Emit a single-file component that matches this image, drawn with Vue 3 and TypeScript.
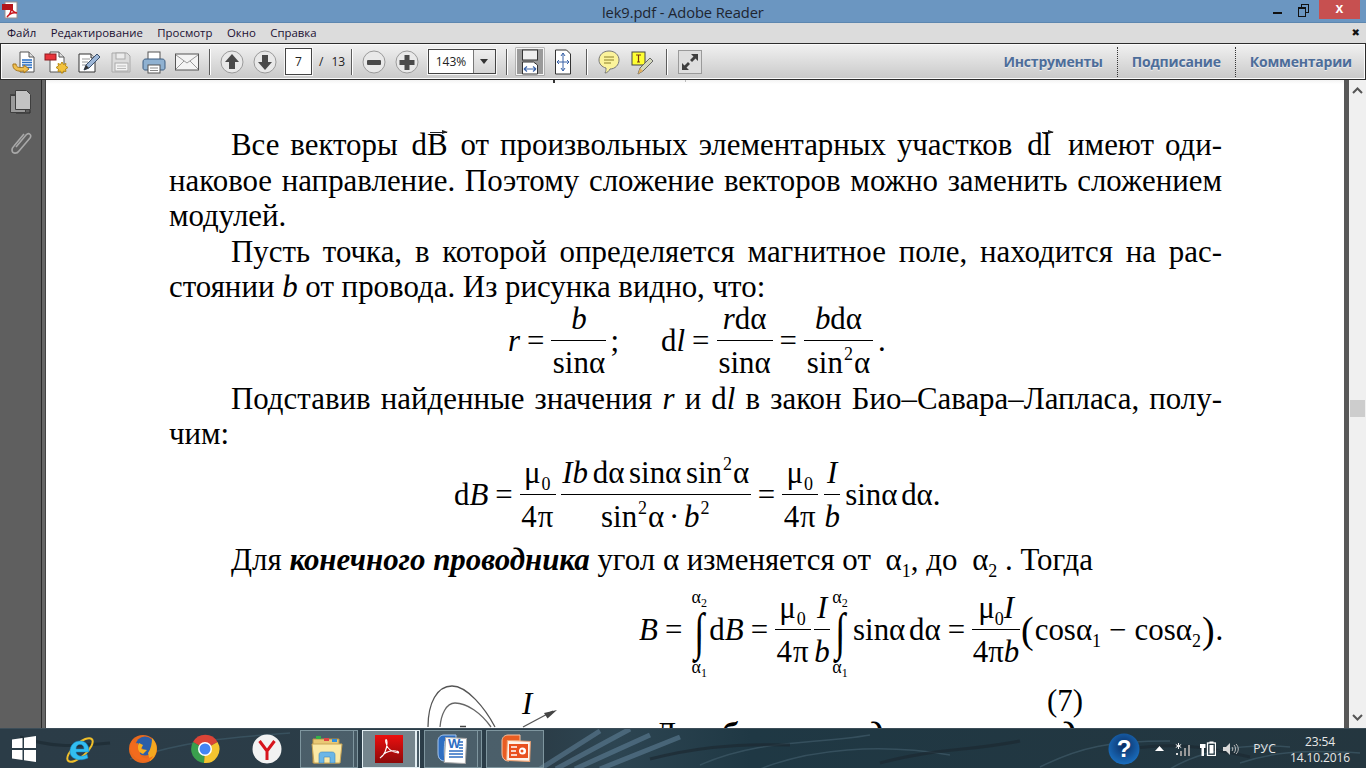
<script setup lang="ts">
const menus: string[] = ['Файл', 'Редактирование', 'Просмотр', 'Окно', 'Справка']
const panels: string[] = ['Инструменты', 'Подписание', 'Комментарии']
</script>

<template>
  <div class="screen">
    <header class="titlebar">
      <svg class="app-icon" width="18" height="18" viewBox="0 0 18 18">
        <rect x="4" y="1" width="12" height="16" fill="#fff" stroke="#9a8f8f" />
        <rect x="1" y="3" width="11" height="6" fill="#b3161b" />
        <path d="M6 16c3-2 5-7 4-11 0 4 2 6 6 7-4-1-7 0-10 4z" fill="none" stroke="#c8141b" stroke-width="1.4" />
      </svg>
      <span class="title">lek9.pdf - Adobe Reader</span>
      <div class="winbtns">
        <svg width="10" height="4" viewBox="0 0 10 4" class="wmin"><rect y="1" width="9" height="2" fill="#111" /></svg>
        <svg width="12" height="14" viewBox="0 0 12 14" class="wmax">
          <rect x="3.5" y="0.5" width="7" height="8" fill="none" stroke="#111" />
          <rect x="0.5" y="3.5" width="7" height="9" fill="#6b96c1" stroke="#111" />
          <rect x="0" y="3" width="8" height="2" fill="#111" />
        </svg>
        <div class="wclose">x</div>
      </div>
    </header>

    <nav class="menubar">
      <span v-for="m in menus" :key="m" class="menu">{{ m }}</span>
      <span class="menu-x">✖</span>
    </nav>

    <div class="toolbar">
      <!-- open -->
      <svg class="ic" width="24" height="24" viewBox="0 0 24 24">
        <path d="M9 2h9l5 5v15H9z" fill="#fff" stroke="#555" />
        <path d="M18 2v5h5" fill="#ddd" stroke="#555" />
        <path d="M11 10h10M11 12.500h10M11 15h10M11 17.500h10" stroke="#2a6fc4" stroke-width="1.300" />
        <path d="M2 14c-1 6 5 8 11 7v2l5-4-5-4v2c-4 1-8 1-8-3z" fill="#f0c050" stroke="#a8761a" />
      </svg>
      <!-- create -->
      <svg class="ic" width="24" height="24" viewBox="0 0 24 24">
        <path d="M6 2h9l5 5v15H6z" fill="#fff" stroke="#555" />
        <path d="M15 2v5h5" fill="#ddd" stroke="#555" />
        <rect x="1" y="4" width="11" height="6" fill="#e8333a" stroke="#8d1b1f" />
        <path d="M18 12l1.500 2.500 2.500-1-.5 2.500 2.500 1.500-2.500 1.500.5 2.500-2.500-.5-1.500 2.500-1.500-2.500-2.500.5.5-2.500-2.500-1.500 2.500-1.500-.5-2.500 2.500 1z" fill="#f3c23c" stroke="#b88a16" />
      </svg>
      <!-- edit -->
      <svg class="ic" width="24" height="24" viewBox="0 0 24 24">
        <path d="M2 4h12l4 4v14H2z" fill="#fff" stroke="#333" />
        <path d="M14 4v4h4" fill="#ddd" stroke="#333" />
        <path d="M5 9h8M5 12h6M5 15h4" stroke="#999" />
        <path d="M7 20l2-5L20 4l3 3L12 18z" fill="#9db7d8" stroke="#3b4f6b" />
        <path d="M7 20l2-5 3 3z" fill="#333" />
      </svg>
      <!-- save -->
      <svg class="ic save" width="22" height="24" viewBox="0 0 22 24">
        <path d="M2 3h15l3 3v16H2z" fill="#dcdcdc" stroke="#aaa" />
        <rect x="6" y="3" width="9" height="6" fill="#ececec" stroke="#aaa" />
        <rect x="5" y="13" width="13" height="8" fill="#f3f3f3" stroke="#aaa" />
        <path d="M7 16h9M7 18.500h9" stroke="#bbb" />
      </svg>
      <!-- print -->
      <svg class="ic" width="24" height="24" viewBox="0 0 24 24">
        <rect x="6" y="2" width="12" height="9" fill="#fff" stroke="#555" />
        <path d="M1 12c0-2 1-3 3-3h16c2 0 3 1 3 3v6c0 1-1 2-2 2H3c-1 0-2-1-2-2z" fill="#8fb1d1" stroke="#3c5d80" />
        <rect x="6" y="15" width="12" height="8" fill="#fff" stroke="#555" />
        <path d="M8 18h8M8 20.500h8" stroke="#888" />
      </svg>
      <!-- mail -->
      <svg class="ic mail" width="24" height="18" viewBox="0 0 24 18">
        <rect x="0.500" y="1" width="23" height="16" fill="#f4f4f4" stroke="#555" />
        <path d="M1 2l11 8 11-8M1 16l8-8M23 16l-8-8" fill="none" stroke="#999" />
      </svg>
      <i class="sep sep-a"></i>

      <svg class="ic" width="24" height="24" viewBox="0 0 24 24">
        <circle cx="12" cy="12" r="11" fill="#e9e9e9" stroke="#9a9a9a" />
        <path d="M12 4l7 8h-4v7H9v-7H5z" fill="#4a4a4a" />
      </svg>
      <svg class="ic" width="24" height="24" viewBox="0 0 24 24">
        <circle cx="12" cy="12" r="11" fill="#e9e9e9" stroke="#9a9a9a" />
        <path d="M12 20l7-8h-4V5H9v7H5z" fill="#4a4a4a" />
      </svg>
      <span class="pagebox">7</span>
      <span class="pagecount"><b>/</b><b>13</b></span>
      <i class="sep sep-b"></i>
      <svg class="ic" width="24" height="24" viewBox="0 0 24 24">
        <circle cx="12" cy="12" r="11" fill="#e9e9e9" stroke="#9a9a9a" />
        <rect x="5" y="10" width="14" height="5" rx="1" fill="#4a4a4a" />
      </svg>
      <svg class="ic" width="24" height="24" viewBox="0 0 24 24">
        <circle cx="12" cy="12" r="11" fill="#e9e9e9" stroke="#9a9a9a" />
        <path d="M9.500 5h5v5h5v5h-5v5h-5v-5h-5v-5h5z" fill="#4a4a4a" />
      </svg>
      <div class="zoombox">
        <span class="zoomval">143%</span>
        <span class="zoomarrow"></span>
      </div>
      <i class="sep sep-c"></i>
      <div class="fitw">
        <svg width="18" height="26" viewBox="0 0 18 26">
          <rect x="1.500" y="1" width="15" height="10" fill="#eee" stroke="#333" />
          <path d="M1.500 13h11l4 3v9h-15z" fill="#fff" stroke="#333" />
          <path d="M3 20h12M3 20l3-2.500M3 20l3 2.500M15 20l-3-2.500M15 20l-3 2.500" fill="none" stroke="#3a63a8" stroke-width="1.200" />
        </svg>
      </div>
      <svg class="ic fitp" width="18" height="26" viewBox="0 0 18 26">
        <path d="M1.500 1h11l4 4v20h-15z" fill="#fff" stroke="#333" />
        <path d="M9 4v18M9 4L7 7M9 4l2 3M9 22l-2-3M9 22l2-3M3 13h12M3 13l2-2M3 13l2 2M15 13l-2-2M15 13l-2 2" fill="none" stroke="#3a63a8" />
      </svg>
      <i class="sep sep-d"></i>
      <svg class="ic comment" width="22" height="26" viewBox="0 0 22 26">
        <path d="M11 2c6 0 10 4 10 9s-4 9-9 9c-1 2-3 4-5 4 1-2 1-3 1-5-4-1-7-4-7-8 0-5 4-9 10-9z" fill="#fbf39b" stroke="#777" />
        <path d="M6 8h10M6 11h10M6 14h7" stroke="#8a7f2a" />
      </svg>
      <svg class="ic" width="23" height="26" viewBox="0 0 23 26">
        <rect x="1" y="3" width="13" height="13" fill="#ffff33" stroke="#444" />
        <path d="M5 6h5M7.500 6v7M6 13h3" stroke="#7a3a10" stroke-width="1.200" />
        <path d="M7 25l2-6 10-10 3 3-10 10z" fill="#d4d8bc" stroke="#666" />
        <path d="M7 25l2-6 3 3z" fill="#e0b060" />
      </svg>
      <i class="sep sep-e"></i>
      <div class="expand">
        <svg width="18" height="18" viewBox="0 0 18 18">
          <path d="M10 1h7v7l-2.500-2.500-3.500 3.500-2-2 3.500-3.500zM8 17H1v-7l2.500 2.500L7 9l2 2-3.500 3.500z" fill="#3f3f3f" />
        </svg>
      </div>

      <div class="panels">
        <span v-for="p in panels" :key="p" class="panel">{{ p }}</span>
      </div>
    </div>

    <div class="main">
      <aside class="nav">
        <svg width="24" height="26" viewBox="0 0 24 26">
          <path d="M1 7h6v18h14v-3" fill="none" stroke="#2d2d2d" />
          <path d="M1.500 7.500h15v17h-15z" fill="#9a9a9a" stroke="#3e3e3e" />
          <path d="M6.500 2.500h11l4 4v15h-15z" fill="#c3c3c3" stroke="#3e3e3e" />
        </svg>
        <svg class="clip" width="22" height="26" viewBox="0 0 22 26">
          <path d="M6 17L16 5c3-3 6 0 4 3L9 21c-2 3-7 3-7-1 0-1 1-3 2-4L14 4" fill="none" stroke="#a8a8a8" stroke-width="1.600" />
        </svg>
      </aside>
      <div class="divider"></div>

      <article class="page">
        <i class="speck speck-a"></i>
        <i class="speck speck-b"></i>
        <div class="ln j ind">Все векторы <span class="gap-a">d<span class="vec">B</span></span> от произвольных элементарных участков <span class="gap-b">d<span class="vec vec-l">l</span></span> имеют оди-</div>
        <div class="ln j">наковое направление. Поэтому сложение векторов можно заменить сложением</div>
        <div class="ln">модулей.</div>
        <div class="ln j ind">Пусть точка, в которой определяется магнитное поле, находится на рас-</div>
        <div class="ln">стоянии <em>b</em> от провода. Из рисунка видно, что:</div>

        <div class="formula f1">
          <em>r</em><span class="eq">=</span>
          <span class="frac w55"><span class="num"><em>b</em></span><span class="den">sinα</span></span>
          <span class="semi">;</span>
          <span class="dl">d<em>l</em></span><span class="eq">=</span>
          <span class="frac w56"><span class="num"><em>r</em>dα</span><span class="den">sinα</span></span>
          <span class="eq">=</span>
          <span class="frac w69"><span class="num"><em>b</em>dα</span><span class="den">sin<sup>2</sup>α</span></span>
          <span class="dot">.</span>
        </div>

        <div class="ln j ind after-f1">Подставив найденные значения <em>r</em> и d<em>l</em> в закон Био–Савара–Лапласа, полу-</div>
        <div class="ln">чим:</div>

        <div class="formula f2">
          <span>d<em>B</em></span><span class="eq">=</span>
          <span class="frac w36"><span class="num">μ<sub>0</sub></span><span class="den">4π</span></span>
          <span class="frac w190"><span class="num tight"><em>Ib</em> dα sinα sin<sup>2</sup>α</span><span class="den tight">sin<sup>2</sup>α · <em>b</em><sup>2</sup></span></span>
          <span class="eq">=</span>
          <span class="frac w36"><span class="num">μ<sub>0</sub></span><span class="den">4π</span></span>
          <span class="frac w16"><span class="num"><em>I</em></span><span class="den"><em>b</em></span></span>
          <span class="tail">sinα dα.</span>
        </div>

        <div class="ln ind after-f2">Для <strong>конечного проводника</strong> угол α изменяется от <span class="gap-l">α<sub>1</sub></span>, до <span class="gap-l">α<sub>2</sub></span> . Тогда</div>

        <div class="formula f3">
          <em>B</em><span class="eq">=</span>
          <span class="int"><span class="lim">α<sub>2</sub></span><span class="sign">∫</span><span class="lim">α<sub>1</sub></span></span>
          <span class="tail0">d<em>B</em></span><span class="eq">=</span>
          <span class="frac w36"><span class="num">μ<sub>0</sub></span><span class="den">4π</span></span>
          <span class="frac w16 w16b"><span class="num"><em>I</em></span><span class="den"><em>b</em></span></span>
          <span class="int"><span class="lim">α<sub>2</sub></span><span class="sign">∫</span><span class="lim">α<sub>1</sub></span></span>
          <span class="tail0 tail1">sinα dα</span><span class="eq">=</span>
          <span class="frac w48"><span class="num">μ<sub>0</sub><em>I</em></span><span class="den">4π<em>b</em></span></span>
          <span class="paren">(</span><span>cosα<sub>1</sub></span><span class="minus">−</span><span>cosα<sub>2</sub></span><span class="paren">)</span><span>.</span>
        </div>

        <div class="figrow">
          <svg class="figure" width="140" height="44" viewBox="0 0 140 44">
            <path d="M1 44C1 20 10 3 25 3c15 0 33 22 43 41" fill="none" stroke="#555" stroke-width="1.300" />
            <path d="M13 44c1-12 6-24 15-24 12 0 26 10 36 24" fill="none" stroke="#666" stroke-width="1.300" />
            <path d="M33 43.500h6" stroke="#444" stroke-width="1.500" />
            <path d="M96 44l30-16" stroke="#555" stroke-width="1.300" />
            <path d="M130 27l-13 3 3.500 5.500z" fill="#444" />
            <text x="95" y="31" class="fig-i">I</text>
          </svg>
          <span class="eqno">(7)</span>
        </div>
        <div class="ln last">Для <strong class="last-b">бесконечно длинного проводника</strong></div>
      </article>

      <div class="strip"></div>
      <div class="scrollbar">
        <svg width="11" height="7" viewBox="0 0 11 7" class="arrow"><path d="M1 6l4.500-4.500L10 6" fill="none" stroke="#555" stroke-width="2" /></svg>
        <span class="thumb"></span>
        <svg width="11" height="7" viewBox="0 0 11 7" class="arrow"><path d="M1 1l4.500 4.500L10 1" fill="none" stroke="#555" stroke-width="2" /></svg>
      </div>
    </div>

    <footer class="taskbar">
      <svg class="grass" width="1366" height="40" viewBox="0 0 1366 40">
        <path d="M540 40L600 2M556 40L630 0M575 40L650 6M600 40L680 8" stroke="#6f93ad" stroke-width="5" opacity=".45" fill="none" />
        <path d="M700 36c60-26 110-20 170-30M760 40c50-20 120-26 190-14M1040 38c40-20 70-26 130-26M1170 40c30-18 70-26 120-22M1240 34c30-10 60-14 120-10M130 30c60-20 110-22 160-26" stroke="#3f5a68" stroke-width="1.500" opacity=".7" fill="none" />
        <path d="M650 30c40-10 80-16 140-14M880 34c50-14 90-12 140-22M1130 20c40-6 70-4 120 8M20 8c30 10 50 10 90 6" stroke="#1d2a32" stroke-width="3" opacity=".7" fill="none" />
      </svg>
      <svg class="win" width="24" height="28" viewBox="0 0 24 28">
        <path d="M0 4.500L10.500 3v10H0zM12 2.800L24 1v12H12zM0 15h10.500v10L0 23.500zM12 15h12v12l-12-1.800z" fill="#fff" />
      </svg>
      <div class="tb tb-ie">
        <svg width="30" height="32" viewBox="0 0 30 32">
          <ellipse cx="14" cy="17" rx="16" ry="6.500" transform="rotate(-42 14 17)" fill="none" stroke="#f0bf2a" stroke-width="2" />
          <path d="M4 19c0-7 4-11 10-11s9 4 9 11H10c.5 4 6 6 11 2l1 4c-8 4-18 1-18-6zm6-3h8c0-3-1.500-4.500-4-4.500S10 13 10 16z" fill="#32bdf0" stroke="#1180c8" stroke-width=".5" />
        </svg>
      </div>
      <div class="tb">
        <svg width="30" height="32" viewBox="0 0 30 32">
          <circle cx="15" cy="16" r="14" fill="#e8691d" />
          <circle cx="17" cy="13" r="9.500" fill="#2b5ea8" />
          <path d="M24 5c4 4 6 10 4 15-1 3-3 6-6 8l-2-8c3-4 4-10 4-15z" fill="#f5a81f" />
          <path d="M2 16c2 7 8 12 15 12 4 0 7-2 8-5-4 3-9 3-12 0-2-3-1-6 2-7-2-1-5-3-5-6C7 11 4 9 6 5c-3 3-4 7-4 11z" fill="#f26b1d" />
          <path d="M11 10l4 2-2 4 6 1-4 4c-3-1-5-3-5-6 0-2 0-3 1-5z" fill="#f8b01e" />
        </svg>
      </div>
      <div class="tb">
        <svg width="30" height="30" viewBox="0 0 30 30">
          <path d="M15 15L3 8A14 14 0 0 1 27.500 8z" fill="#db4437" />
          <path d="M15 15L3 8A14 14 0 0 0 14 29z" fill="#3a9f4d" />
          <path d="M15 15L14 29A14 14 0 0 0 27.500 8z" fill="#f4c430" />
          <circle cx="15" cy="15" r="7" fill="#fff" />
          <circle cx="15" cy="15" r="5.500" fill="#4285f4" />
        </svg>
      </div>
      <div class="tb">
        <svg width="30" height="30" viewBox="0 0 30 30">
          <circle cx="15" cy="15" r="14.500" fill="#f2f2f2" />
          <path d="M7.500 7l7.500 10 7.500-10M15 17v9" fill="none" stroke="#d7141c" stroke-width="3" />
        </svg>
      </div>
      <div class="task t-folder">
        <svg width="32" height="32" viewBox="0 0 32 32">
          <path d="M2 6h26v24H2z" fill="#e9c874" stroke="#b89345" />
          <rect x="5" y="3" width="5" height="3" fill="#35b04a" />
          <rect x="13" y="5" width="5" height="3" fill="#d44" />
          <rect x="21" y="6" width="5" height="3" fill="#2f8fe0" />
          <path d="M1 11h30l-2 19H3z" fill="#fbe9a6" stroke="#c9a657" />
          <path d="M8 30v-8c0-2 1-3 3-3h10c2 0 3 1 3 3v8h-5v-6h-6v6z" fill="#6cb6e6" stroke="#3f86bd" stroke-width=".6" />
        </svg>
      </div>
      <span class="stack"></span>
      <div class="task active">
        <svg width="28" height="28" viewBox="0 0 28 28">
          <defs><linearGradient id="acro" x1="0" y1="0" x2="0" y2="1"><stop offset="0" stop-color="#ec0f0f" /><stop offset="1" stop-color="#8c0a0a" /></linearGradient></defs>
          <rect width="28" height="28" fill="url(#acro)" />
          <path d="M5 23c4-2 7-9 7-15 0-5-2-4-1 0 1 5 5 9 12 10 1 0 1-2-2-2-6-1-12 2-16 7z" fill="none" stroke="#fff" stroke-width="1.100" />
        </svg>
      </div>
      <span class="stack bright"></span>
      <div class="task">
        <svg width="32" height="32" viewBox="0 0 32 32">
          <path d="M3 8c0-4 3-6 6-6h12v6H10c-1 6-1 14 0 20-4 0-7-2-7-8z" fill="#2e6ec2" stroke="#a8c8ee" />
          <rect x="10" y="5" width="21" height="25" transform="rotate(3 20 17)" fill="#fff" stroke="#aaa" />
          <text x="13" y="15" class="word-w">W</text>
          <path d="M24 9h4M24 12h4M24 15h4M14 18h14M14 21h14M14 24h14" stroke="#2e6ec2" stroke-width="1.500" />
        </svg>
      </div>
      <span class="stack"></span>
      <div class="task t-ppt">
        <svg width="32" height="32" viewBox="0 0 32 32">
          <path d="M3 8c0-4 3-6 6-6h12v6H10c-1 6-1 14 0 20-4 0-7-2-7-8z" fill="#e85d22" stroke="#f6c3a2" />
          <rect x="8" y="8" width="23" height="20" transform="rotate(2 20 18)" fill="#fdf3ea" stroke="#f0a070" />
          <rect x="10" y="11" width="19" height="14" fill="#e9501e" />
          <path d="M12 14h6M12 18h5M12 22h6" stroke="#fff" stroke-width="1.600" />
          <circle cx="23.500" cy="18" r="3.500" fill="#fff" />
          <circle cx="23" cy="18" r="1.500" fill="#e9501e" />
        </svg>
      </div>

      <div class="tray">
        <svg class="help" width="32" height="32" viewBox="0 0 32 32">
          <defs><radialGradient id="hlp" cx=".5" cy=".4" r=".6"><stop offset="0" stop-color="#0b2d63" /><stop offset="1" stop-color="#1a6fc0" /></radialGradient></defs>
          <circle cx="16" cy="16" r="15.500" fill="url(#hlp)" />
          <text x="16" y="24" class="help-q">?</text>
        </svg>
        <svg class="up" width="9" height="5" viewBox="0 0 9 5"><path d="M0 5l4.500-5L9 5z" fill="#fff" /></svg>
        <svg class="signal" width="16" height="14" viewBox="0 0 16 14">
          <rect x="1" y="11" width="2" height="2" fill="#ddd" />
          <rect x="5" y="9" width="2" height="5" fill="#999" />
          <rect x="9" y="6" width="2" height="8" fill="#999" />
          <rect x="13" y="3" width="2" height="11" fill="#999" />
          <path d="M3.500 1v6M0.800 2.500l5.400 3M6.200 2.500l-5.400 3" stroke="#eee" stroke-width="1" />
        </svg>
        <svg class="batt" width="16" height="15" viewBox="0 0 16 15">
          <path d="M1.500 0v3M4 0v3M0 3h5.500v4H4v8H1.500V7H0z" fill="#fff" />
          <rect x="7.500" y="2" width="8" height="12.500" fill="none" stroke="#fff" stroke-width="1.300" />
          <rect x="9.500" y="4" width="4" height="8.500" fill="#fff" />
          <rect x="9.500" y="0.500" width="4" height="1.500" fill="#fff" />
        </svg>
        <svg class="spk" width="16" height="14" viewBox="0 0 16 14">
          <path d="M0 5h3l4-4v12l-4-4H0z" fill="#d8d8d8" />
          <path d="M9 5c1 1 1 3 0 4M11 3c2 2 2 6 0 8M13 2c3 3 3 7 0 10" fill="none" stroke="#bbb" />
        </svg>
        <span class="lang">РУС</span>
        <div class="clock"><span>23:54</span><span>14.10.2016</span></div>
      </div>
    </footer>
  </div>
</template>

<style>
html, body { margin: 0; padding: 0; overflow: hidden; }
</style>

<style scoped>
.screen {
  width: 1366px;
  height: 768px;
  display: flex;
  flex-direction: column;
  overflow: hidden;
  font-family: "Open Sans", "Noto Sans", sans-serif;
}
.titlebar {
  height: 23px;
  flex: none;
  background: #6b96c1;
  display: flex;
  align-items: center;
  position: relative;
  box-shadow: inset 0 -1px 0 #5d87b0;
}
.app-icon { margin: -3px 0 0 1px; }
.title {
  position: absolute;
  left: 602px;
  top: 2px;
  font-size: 14.700px;
  line-height: 20px;
  color: #1e2530;
  letter-spacing: -.1px;
}
.winbtns { margin-left: auto; display: flex; align-items: flex-start; align-self: flex-start; }
.wmin { margin: 11px 15px 0 0; }
.wmax { margin: 4px 9px 0 0; }
.wclose {
  width: 41px; height: 19px; margin-right: 6px; background: #c75050;
  color: #fff; text-align: center; font: bold 14px/16px "Liberation Sans", sans-serif;
}
.menubar {
  height: 20px;
  flex: none;
  background: #dcdcdc;
  display: flex;
  align-items: center;
  padding-left: 7px;
  gap: 14.500px;
  position: relative;
}
.menu { font-size: 11.400px; color: #1b1033; line-height: 20px; }
.menu-x { position: absolute; right: 6px; top: 2px; font: 10px/16px "DejaVu Sans", sans-serif; color: #111; }
.toolbar {
  height: 37px;
  flex: none;
  box-sizing: border-box;
  border: 1px solid #2c2c2c;
  box-shadow: inset 0 0 0 1px #fbfbfb;
  background: linear-gradient(#f1f1f1, #c9c9c9);
  display: flex;
  align-items: center;
  padding-left: 10px;
  position: relative;
}
.ic { flex: none; margin-right: 9px; }
.save { margin-right: 10px; }
.mail { margin-right: 10px; }
.sep { width: 1px; height: 26px; background: #5c5c5c; box-shadow: 1px 0 0 #fff; flex: none; margin-right: 11px; }
.sep-a { margin-right: 10px; }
.pagebox, .zoomval {
  font-size: 12px;
  color: #222;
  background: #fff;
  text-align: center;
}
.pagebox {
  width: 25px; height: 25px; line-height: 25px;
  border: 1px solid #444; margin-left: -1px; box-shadow: 0 0 0 1px #f6f6f6;
  flex: none;
}
.pagecount { display: flex; gap: 8px; margin: 0 8px 0 7px; font-size: 12px; color: #222; width: 23px; }
.pagecount b { font-weight: 400; }
.sep-b { margin-right: 10px; margin-left: 1px; }
.zoombox {
  width: 68px; height: 25px; flex: none; box-sizing: border-box;
  border: 1px solid #444; display: flex; box-shadow: 0 0 0 1px #f6f6f6;
}
.zoomval { width: 44px; line-height: 23px; border-right: 1px solid #777; }
.zoomarrow { flex: 1; background: linear-gradient(#eee, #d4d4d4); position: relative; }
.zoomarrow::after {
  content: ""; position: absolute; left: 6px; top: 9px;
  border: 4px solid transparent; border-top: 5px solid #333; border-bottom: 0;
}
.sep-c { margin-left: 10px; margin-right: 9px; }
.fitw {
  width: 28px; height: 27px; flex: none; box-sizing: border-box; background: #9a9a9a;
  border: 1px solid #f4f4f4; box-shadow: 0 0 0 .5px #888;
  display: flex; justify-content: center; align-items: center; margin-right: 10px;
}
.fitp { margin-right: 14px; }
.sep-d { margin-right: 11px; }
.comment { margin-right: 11px; }
.sep-e { margin-left: 3px; margin-right: 11px; }
.expand {
  width: 24px; height: 24px; box-sizing: border-box; flex: none; border: 1px solid #9a9a9a;
  background: #dedede; display: flex; align-items: center; justify-content: center;
}
.panels { margin-left: auto; display: flex; margin-right: 13px; }
.panel {
  font-size: 14px; font-weight: 700; color: #4d6d9a; line-height: 30px;
  padding: 0 14px; border-left: 1px dotted #333; letter-spacing: -.2px;
  text-shadow: 0 1px 0 #eee;
}
.panel:first-child { border-left: 0; }
.panel:last-child { padding-right: 0; }
.main { flex: 1; min-height: 0; display: flex; }
.nav {
  width: 41px; flex: none; background: #5f5f5f; display: flex; flex-direction: column;
  align-items: center; padding-top: 8px; box-sizing: border-box;
}
.nav svg { flex: none; }
.clip { margin-top: 16px; }
.divider { width: 5px; flex: none; background: linear-gradient(90deg, #2b2b2b 0 1px, #666 1px 4px, #444 4px); }
.page {
  flex: 1; min-width: 0; background: #fff; color: #000;
  box-sizing: border-box; padding: 47px 122px 0 123px;
  font-family: "Liberation Serif", serif; font-size: 30.900px; line-height: 35.500px;
  position: relative; overflow: hidden;
  background-image: linear-gradient(#f3f3f3, #fff);
  background-size: 100% 4px; background-repeat: no-repeat;
}
.speck { position: absolute; top: 0; width: 2px; height: 3px; background: #333; }
.speck-a { left: 507px; }
.speck-b { left: 639px; width: 1px; height: 2px; background: #bbb; }
.ln { white-space: nowrap; }
.ln.j { text-align: justify; text-align-last: justify; white-space: normal; }
.ind { padding-left: 62px; }
.gap-a { margin: 0 2px 0 3px; }
.gap-b { margin: 0 6px 0 4px; }
.gap-l { margin-left: 7px; }
.vec { position: relative; display: inline-block; }
.vec::before {
  content: ""; position: absolute; left: 3px; right: 1px; top: 5px; border-top: 1px solid #222;
}
.vec::after {
  content: ""; position: absolute; right: 0; top: 3px;
  border: 2.500px solid transparent; border-left: 6px solid #222; border-right: 0;
}
.vec-l::before { left: -1px; right: -2px; }
.vec-l::after { right: -3px; }
sub { font-size: 18px; line-height: 0; vertical-align: -7px; }
sup { font-size: 18px; line-height: 0; vertical-align: 13px; margin: 0 1px; }
strong { font-weight: 700; font-style: italic; }
.formula { display: flex; align-items: center; white-space: nowrap; }
.formula > em, .formula > span { flex: none; }
.eq { margin: 0 7px; }
.frac { display: flex; flex-direction: column; text-align: center; }
.num { height: 36px; line-height: 30px; border-bottom: 1px solid #000; display: block; }
.den { height: 36px; line-height: 44px; display: block; padding-bottom: 1px; }
.tight { word-spacing: -3px; }
.w55 { width: 55px; } .w56 { width: 56px; } .w69 { width: 69px; }
.w36 { width: 36px; letter-spacing: 1px; } .w190 { width: 190px; margin-left: 5px; } .w16 { width: 16px; margin-left: 6px; }
.w16b { margin-left: 3px; }
.w48 { width: 48px; }
.f1 { height: 73px; padding-left: 339px; }
.semi { margin-left: 4px; }
.dl { margin-left: 42px; }
.dot { margin-left: 5px; }
.after-f1 { margin-top: 3px; }
.f2 { height: 86px; padding-left: 285px; }
.tail { margin-left: 5px; word-spacing: -4px; }
.after-f2 { margin-top: 4px; }
.f3 { height: 106px; padding-left: 470px; }
.int { display: flex; flex-direction: column; align-items: center; width: 20px; height: 88px; margin-top: 4px; justify-content: space-between; }
.lim { font-size: 18px; line-height: 18px; height: 18px; }
.lim sub { font-size: 12px; vertical-align: -4px; }
.sign { font-size: 52px; line-height: 52px; height: 52px; transform: scaleX(.7); }
.tail0 { word-spacing: -4px; }
.tail1 { margin-left: 3px; }
.paren { font-size: 38px; line-height: 40px; margin: 0 1px; }
.minus { margin: 0 8px; }
.figrow { display: flex; height: 33px; padding-left: 258px; align-items: flex-start; }
.figure { flex: none; overflow: visible; }
.fig-i { font-family: "Liberation Serif", serif; font-style: italic; font-size: 31px; fill: #000; }
.eqno { margin-left: 480px; }
.last { padding-left: 486px; }
.last-b { margin-left: 8px; letter-spacing: -1.200px; }
.strip { width: 5px; flex: none; background: #585858; }
.scrollbar {
  width: 17px; flex: none; background: #f0f0f0; position: relative;
  display: flex; flex-direction: column; align-items: center; justify-content: space-between;
  padding: 7px 0; box-sizing: border-box;
}
.thumb { position: absolute; left: 1px; right: 1px; top: 320px; height: 17px; background: #cdcdcd; }
.taskbar {
  height: 40px; flex: none; position: relative; display: flex; align-items: center;
  background: linear-gradient(90deg, #2b3c47 0%, #2b3d48 40%, #2d4552 45%, #1f3844 55%, #24363f 100%);
  border-top: 1px solid #3c4d58; box-sizing: border-box;
}
.grass { position: absolute; left: 0; top: 0; }
.win { position: relative; margin-left: 12px; flex: none; }
.tb { position: relative; flex: none; width: 62px; display: flex; justify-content: center; }
.tb-ie { margin-left: 14px; }
.task {
  position: relative; flex: none; height: 38px; box-sizing: border-box;
  border: 1px solid #7f969f; background: rgba(150, 175, 185, .3);
  display: flex; align-items: center; justify-content: center; width: 54px;
}
.t-folder { margin-left: 2px; }
.active { border: 1px solid #e2eef2; background: rgba(190, 205, 210, .5); }
.t-ppt { width: 58px; }
.stack { position: relative; flex: none; width: 4px; height: 38px; border: 1px solid #7f969f; border-left: 0; box-sizing: border-box; background: rgba(150, 175, 185, .25); margin-right: 4px; }
.bright { border-color: #e2eef2; border-left: 1px solid #e2eef2; }
.word-w { font: bold 13px "Liberation Sans", sans-serif; fill: #2e6ec2; }
.tray { position: relative; margin-left: auto; display: flex; align-items: center; color: #e8e8e8; }
.help { margin-right: 15px; }
.up { margin-right: 11px; }
.signal { margin-right: 9px; }
.batt { margin-right: 7px; }
.spk { margin-right: 14px; }
.help-q { font: bold 24px "Liberation Sans", sans-serif; fill: #fff; text-anchor: middle; }
.lang { font-size: 12px; margin-right: 13px; letter-spacing: .2px; }
.clock { display: flex; flex-direction: column; align-items: center; font-size: 12px; line-height: 16px; margin: 2px 15px 0 0; width: 62px; letter-spacing: -.1px; }
</style>
